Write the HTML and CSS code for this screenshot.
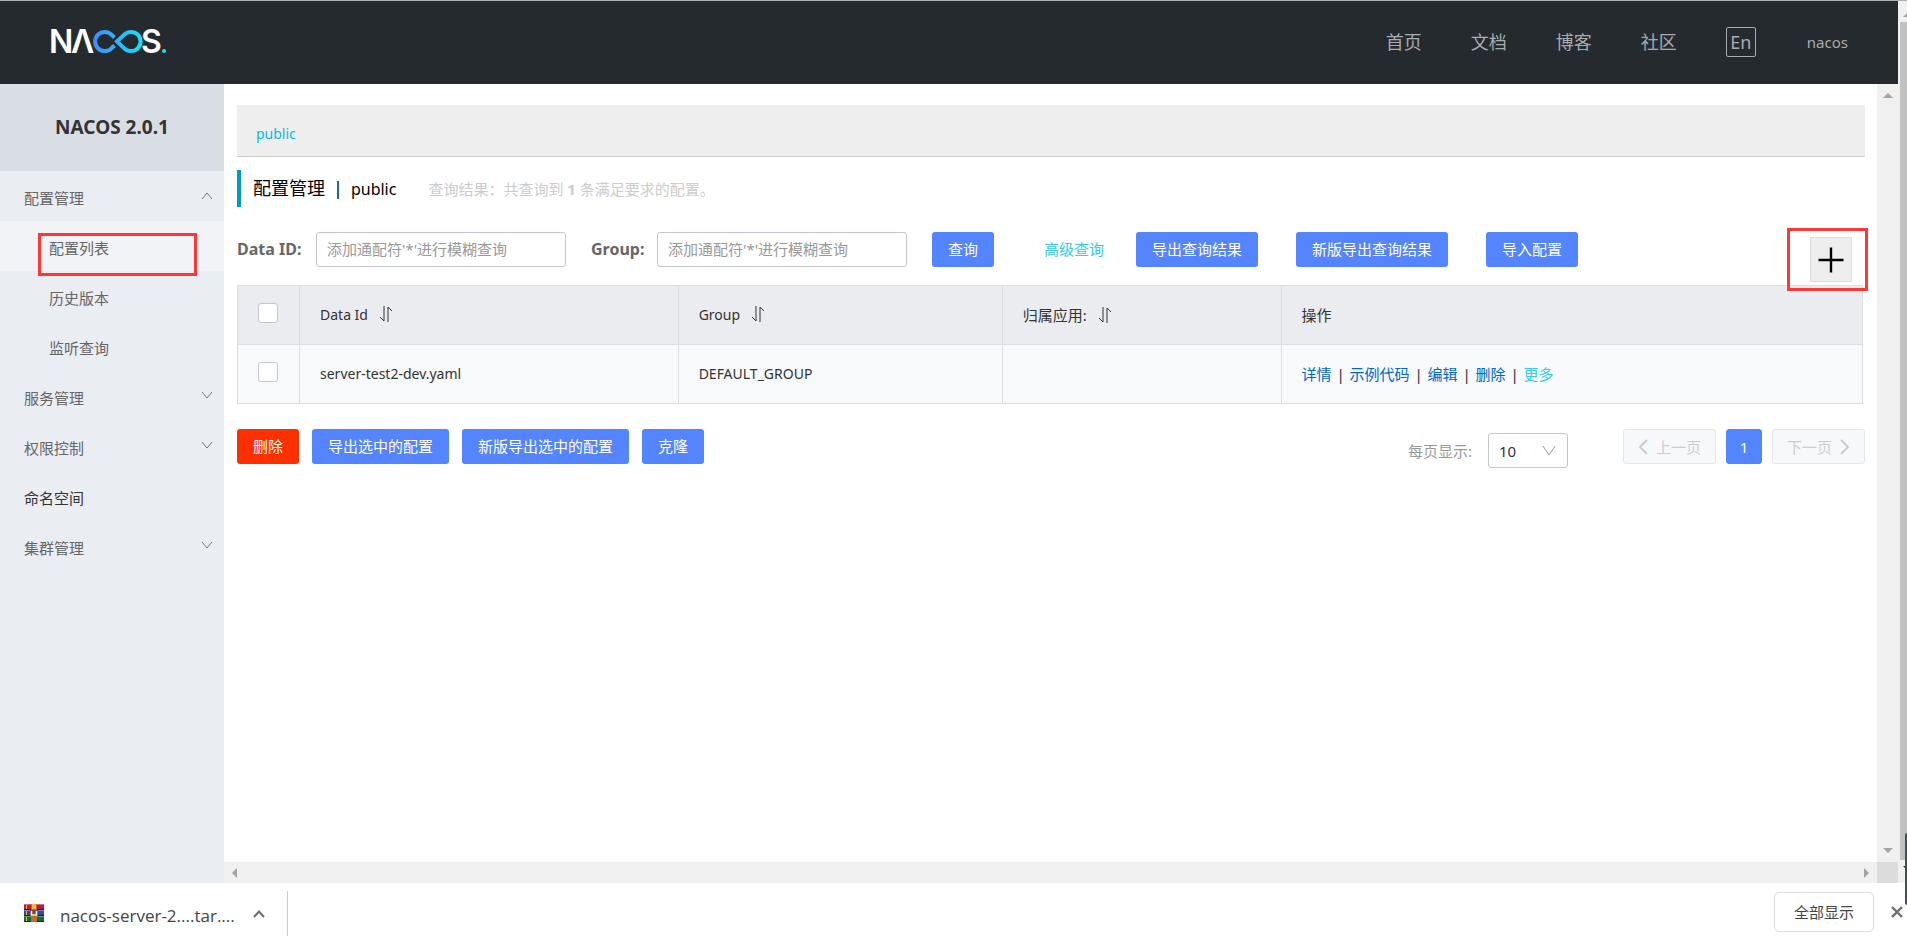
FILE: index.html
```html
<!DOCTYPE html>
<html lang="zh-CN">
<head>
<meta charset="utf-8">
<title>Nacos</title>
<link rel="stylesheet" href="styles.css">
</head>
<body>
<div class="window">
  <div class="viewport">
    <div class="app">
      <header class="topbar">
        <a class="logo" href="#" aria-label="Nacos">
          <svg width="118" height="26" viewBox="0 0 118 26">
            <defs>
              <linearGradient id="loop" gradientUnits="userSpaceOnUse" x1="43" y1="0" x2="92" y2="0">
                <stop offset="0" stop-color="#4089ff"/>
                <stop offset="1" stop-color="#16e2f5"/>
              </linearGradient>
            </defs>
            <g class="logo-text">
              <text x="-1" y="25">N</text>
              <text x="21" y="25">Λ</text>
              <text x="91" y="25">S</text>
            </g>
            <path d="M64.500 9.500 L61.500 6.700 A9.600 9.600 0 1 0 61.500 20.300 L64.500 17.500 M67 13.500 L74 6.900 A9.600 9.600 0 1 1 74 20.100 Z" fill="none" stroke="url(#loop)" stroke-width="4"/>
            <circle cx="114" cy="23" r="2" fill="#16e2f5"/>
          </svg>
        </a>
        <nav class="topnav">
          <a href="#">首页</a>
          <a href="#">文档</a>
          <a href="#">博客</a>
          <a href="#">社区</a>
          <button class="lang" type="button">En</button>
          <a class="user" href="#">nacos</a>
        </nav>
      </header>
      <div class="body">
        <aside class="sidebar">
          <h1 class="version">NACOS 2.0.1</h1>
          <nav class="menu">
            <button class="item" type="button">配置管理<svg class="chev" viewBox="0 0 12 12"><path d="M1 9l5-6 5 6"/></svg></button>
            <a class="item sub current" href="#">配置列表<span class="mark mark-menu"></span></a>
            <a class="item sub" href="#">历史版本</a>
            <a class="item sub" href="#">监听查询</a>
            <button class="item" type="button">服务管理<svg class="chev" viewBox="0 0 12 12"><path d="M1 2l5 6 5-6"/></svg></button>
            <button class="item" type="button">权限控制<svg class="chev" viewBox="0 0 12 12"><path d="M1 2l5 6 5-6"/></svg></button>
            <a class="item dark" href="#">命名空间</a>
            <button class="item" type="button">集群管理<svg class="chev" viewBox="0 0 12 12"><path d="M1 2l5 6 5-6"/></svg></button>
          </nav>
        </aside>
        <main class="main">
          <div class="namespaces"><a href="#">public</a></div>
          <div class="heading">
            <h2>配置管理<span class="bar">|</span><span class="ns">public</span></h2>
            <p>查询结果：共查询到 <strong>1</strong> 条满足要求的配置。</p>
          </div>
          <form class="search">
            <label class="label-id" for="dataId">Data ID:</label>
            <input class="field" id="dataId" type="text" placeholder="添加通配符'*'进行模糊查询">
            <label class="label-group" for="group">Group:</label>
            <input class="field" id="group" type="text" placeholder="添加通配符'*'进行模糊查询">
            <button class="btn query" type="button">查询</button>
            <a class="advanced" href="#">高级查询</a>
            <button class="btn export" type="button">导出查询结果</button>
            <button class="btn export-new" type="button">新版导出查询结果</button>
            <button class="btn import" type="button">导入配置</button>
            <span class="add-wrap">
              <button class="add" type="button" aria-label="新建配置"><svg width="26" height="26" viewBox="0 0 26 26"><path d="M0.500 13h25M13 0.500v25" stroke="#000" stroke-width="2.400"/></svg></button>
              <span class="mark mark-add"></span>
            </span>
          </form>
          <div class="table-wrap">
            <table class="table">
              <colgroup><col class="c-check"><col class="c-id"><col class="c-group"><col class="c-app"><col></colgroup>
              <thead>
                <tr>
                  <th class="check"><input type="checkbox" aria-label="全选"></th>
                  <th>Data Id<svg class="sort" viewBox="0 0 14 16"><path d="M5 0v15L1 11M9 16V1l4 4"/></svg></th>
                  <th>Group<svg class="sort" viewBox="0 0 14 16"><path d="M5 0v15L1 11M9 16V1l4 4"/></svg></th>
                  <th>归属应用:<svg class="sort" viewBox="0 0 14 16"><path d="M5 0v15L1 11M9 16V1l4 4"/></svg></th>
                  <th>操作</th>
                </tr>
              </thead>
              <tbody>
                <tr>
                  <td class="check"><input type="checkbox" aria-label="选择 server-test2-dev.yaml"></td>
                  <td>server-test2-dev.yaml</td>
                  <td>DEFAULT_GROUP</td>
                  <td></td>
                  <td><div class="actions"><a href="#">详情</a><i>|</i><a href="#">示例代码</a><i>|</i><a href="#">编辑</a><i>|</i><a href="#">删除</a><i>|</i><a class="more" href="#">更多</a></div></td>
                </tr>
              </tbody>
            </table>
          </div>
          <div class="footer">
            <div class="batch">
              <button class="btn danger" type="button">删除</button>
              <button class="btn" type="button">导出选中的配置</button>
              <button class="btn" type="button">新版导出选中的配置</button>
              <button class="btn" type="button">克隆</button>
            </div>
            <div class="pager">
              <div class="size">
                <label for="size">每页显示:</label>
                <span class="select"><select id="size"><option>10</option></select><svg viewBox="0 0 14 12"><path d="M1 1l6 9 6-9"/></svg></span>
              </div>
              <div class="pages">
                <button class="page" type="button" disabled><svg viewBox="0 0 10 16"><path d="M9 1L2 8l7 7"/></svg>上一页</button>
                <button class="page on" type="button">1</button>
                <button class="page" type="button" disabled>下一页<svg viewBox="0 0 10 16"><path d="M1 1l7 7-7 7"/></svg></button>
              </div>
            </div>
          </div>
        </main>
        <div class="vscroll">
          <svg width="10" height="5" viewBox="0 0 10 5"><path d="M0 5l5-5 5 5z"/></svg>
          <svg width="10" height="5" viewBox="0 0 10 5"><path d="M0 0l5 5 5-5z"/></svg>
        </div>
        <div class="hscroll">
          <svg width="5" height="10" viewBox="0 0 5 10"><path d="M5 0L0 5l5 5z"/></svg>
          <svg width="5" height="10" viewBox="0 0 5 10"><path d="M0 0l5 5-5 5z"/></svg>
        </div>
        <div class="corner"></div>
      </div>
    </div>
    <div class="outer-scroll">
      <svg width="10" height="5" viewBox="0 0 10 5"><path d="M0 5l5-5 5 5z"/></svg>
      <span class="thumb"></span>
      <svg class="down" width="10" height="5" viewBox="0 0 10 5"><path d="M0 0l5 5 5-5z"/></svg>
    </div>
  </div>
  <footer class="downloads">
    <div class="file">
      <svg class="rar" width="20" height="18" viewBox="0 0 20 18">
        <rect width="20" height="6" fill="#b01c48"/><rect width="20" height="1" fill="#e0668a"/>
        <rect y="6" width="20" height="6" fill="#3943a5"/><rect y="6" width="20" height="1" fill="#7a82d0"/>
        <rect y="12" width="20" height="6" fill="#17693c"/><rect y="12" width="20" height="1" fill="#4aa56e"/>
        <path d="M0 5.500h20M0 11.500h20M0 17.500h20" stroke="#251a28"/>
        <path d="M2.500 1v4M2.500 7v4M2.500 13v4" stroke="#f3b72c"/>
        <rect x="7" width="6" height="18" fill="#c56a20"/><rect x="8" width="4" height="5" fill="#f4b54a"/>
        <rect x="6" y="6" width="8" height="6" fill="#7b4a3a"/><path d="M7.500 7v4h5V7" fill="none" stroke="#f1eee6" stroke-width="1.500"/>
      </svg>
      <span>nacos-server-2....tar....</span>
      <button class="plain" type="button" aria-label="更多操作"><svg width="12" height="8" viewBox="0 0 12 8"><path d="M1 7l5-5.500L11 7" fill="none" stroke="#6a6d71" stroke-width="2"/></svg></button>
    </div>
    <button class="show-all" type="button">全部显示</button>
    <button class="plain close" type="button" aria-label="关闭"><svg width="12" height="12" viewBox="0 0 12 12"><path d="M1 1l10 10M11 1L1 11" stroke="#6a6d71" stroke-width="2.400"/></svg></button>
  </footer>
  <span class="edge"></span>
</div>
</body>
</html>
```
FILE: styles.css
```css
* { box-sizing: border-box; }

body {
  margin: 0;
  font-family: "Noto Sans", "Noto Sans CJK SC", sans-serif;
  font-size: 15px;
  line-height: 20px;
  color: #333;
  background: #fff;
}

button, input, select { font: inherit; color: inherit; margin: 0; }
button { padding: 0; border: 0; background: none; cursor: pointer; }
a { color: inherit; text-decoration: none; }
h1, h2, p { margin: 0; }

.window {
  position: relative;
  display: flex;
  flex-direction: column;
  min-height: 100vh;
  overflow: hidden;
}

.viewport { display: flex; flex: 1; border-top: 1px solid #aeaeae; }
.app { display: flex; flex-direction: column; flex: 1; min-width: 0; }

/* top bar */
.topbar {
  display: flex;
  justify-content: space-between;
  align-items: center;
  height: 83px;
  padding: 0 50px;
  background: #252a2f;
}
.logo { display: block; height: 26px; margin-bottom: 4px; }
.logo svg { display: block; overflow: visible; }
.logo-text { font-family: Inter, sans-serif; font-size: 32px; font-weight: 600; fill: #fff; }

.topnav { display: flex; align-items: center; gap: 49px; padding-bottom: 2px; font-size: 18px; color: #a9acae; }
.lang {
  width: 30px;
  height: 30px;
  border: 1px solid #a9acae;
  border-radius: 2px;
  line-height: 26px;
}
.user { margin-left: 2px; font-size: 15px; }

/* body grid */
.body {
  display: grid;
  flex: 1;
  grid-template-columns: 224px minmax(0, 1fr) 21px;
  grid-template-rows: 1fr 21px;
}
.sidebar { grid-row: 1 / 3; background: #eaedf2; }
.version {
  padding: 32px 0 33px;
  font-size: 19px;
  line-height: 22px;
  text-align: center;
  background: #d9dde4;
}
.menu { display: flex; flex-direction: column; color: #666; }
.item {
  position: relative;
  display: flex;
  justify-content: space-between;
  align-items: center;
  height: 50px;
  padding: 4px 11px 0 24px;
  text-align: left;
}
.sub { padding-left: 49px; }
.current { background: #f1f3f7; }
.dark { color: #333; }
.chev { width: 12px; height: 12px; margin-bottom: 4px; fill: none; stroke: #777; }

.mark { position: absolute; border: 3px solid #ff3737; pointer-events: none; }
.mark-menu { left: 38px; top: 12px; width: 159px; height: 43px; z-index: 1; }
.mark-add { left: -23px; top: -9px; width: 81px; height: 63px; }

/* main */
.main { padding: 21px 12px 21px 13px; }
.namespaces {
  padding: 19px 19px 12px;
  background: #eee;
  border-bottom: 1px solid #ccc;
  color: #00c1de;
}
.namespaces a { display: block; font-size: 14px; }
.heading {
  display: flex;
  align-items: center;
  gap: 32px;
  height: 37px;
  margin: 13px 0 25px;
  padding-left: 12px;
  border-left: 4px solid #09c;
}
.heading h2 { font-size: 18px; font-weight: 400; color: #000; }
.heading .bar { margin: 0 8px; }
.heading .ns { font-size: 16px; }
.heading p { color: #ccc; }

.search { display: flex; align-items: flex-start; min-height: 53px; line-height: 35px; }
.search label { font-size: 16px; font-weight: 700; color: #666; }
.label-id { width: 79px; }
.label-group { width: 66px; margin-left: 25px; }
.field {
  width: 250px;
  height: 35px;
  padding: 0 10px;
  border: 1px solid #c4c6cf;
  border-radius: 3px;
  background: #fff;
}
.field::placeholder { color: #999; opacity: 1; }
.btn {
  height: 35px;
  padding: 0 16px;
  border-radius: 3px;
  background: #5584ff;
  color: #fff;
  line-height: 35px;
  white-space: nowrap;
}
.danger { background: #ff3000; }
.query { margin: 0 50px 0 25px; }
.advanced { margin-right: 32px; color: #33cde5; white-space: nowrap; }
.export, .export-new { margin-right: 38px; }
.add-wrap { position: relative; margin: 5px 13px 0 auto; }
.add {
  display: grid;
  place-items: center;
  width: 42px;
  height: 45px;
  border: 1px solid #ddd;
  background: #eee;
}

.table-wrap { padding-right: 2px; }
.table { width: 100%; table-layout: fixed; border-collapse: collapse; }
.c-check { width: 62px; }
.c-id { width: 23.300%; }
.c-group { width: 19.950%; }
.c-app { width: 17.150%; }
.table th, .table td {
  height: 59px;
  padding: 0 20px;
  border: 1px solid #dcdee3;
  font-size: 15px;
  font-weight: 400;
  text-align: left;
}
.table th { background: #ebecf0; }
.table td { background: #f7f9fa; }
.table td:nth-child(2), .table td:nth-child(3), .table th:nth-child(2), .table th:nth-child(3) { font-size: 14px; }
.table input {
  appearance: none;
  display: block;
  width: 20px;
  height: 20px;
  margin-bottom: 4px;
  border: 1px solid #c4c6cf;
  border-radius: 3px;
  background: #fff;
}
.sort { width: 14px; height: 16px; margin-left: 11px; vertical-align: -2px; fill: none; stroke: #333; }
.actions { display: flex; color: #06c; }
.actions i { width: 18px; text-align: center; font-style: normal; color: #333; }
.actions .more { color: #33cde5; }

.footer { display: flex; justify-content: space-between; margin-top: 25px; }
.batch { display: flex; gap: 13px; }
.pager { display: flex; gap: 55px; }
.size { display: flex; align-items: center; gap: 16px; height: 35px; margin-top: 4px; color: #999; }
.select { position: relative; width: 80px; height: 35px; }
.select select {
  appearance: none;
  width: 100%;
  height: 100%;
  padding: 0 10px;
  border: 1px solid #c4c6cf;
  border-radius: 3px;
  background: #fff;
  color: #333;
}
.select svg { position: absolute; right: 12px; top: 12px; width: 14px; height: 12px; fill: none; stroke: #999; pointer-events: none; }
.pages { display: flex; gap: 10px; }
.page {
  display: flex;
  align-items: center;
  justify-content: center;
  gap: 8px;
  min-width: 36px;
  height: 35px;
  padding: 0 14px;
  border: 1px solid #e6e7eb;
  border-radius: 3px;
  background: #f7f8fa;
  color: #ccc;
}
.page svg { width: 10px; height: 16px; fill: none; stroke: #ccc; stroke-width: 2; }
.page.on { padding: 0; border-color: #5584ff; background: #5584ff; color: #fff; }

/* scroll bars */
.vscroll, .hscroll { display: flex; justify-content: space-between; align-items: center; background: #f0f0f0; fill: #a3a3a3; }
.vscroll { flex-direction: column; padding: 9px 0; }
.hscroll { grid-column: 2; padding: 0 8px; }
.corner { background: #dcdcdc; }
.outer-scroll { display: flex; flex-direction: column; width: 9px; padding: 11px 0 12px 2px; background: #f0f0f0; fill: #a3a3a3; overflow: hidden; }
.outer-scroll svg { flex: none; margin-left: 3px; }
.outer-scroll .thumb { flex: 1; width: 7px; margin: 5px 0 6px; background: #c1c1c1; }
.outer-scroll .down { fill: #333; }
.edge { position: absolute; right: 0; bottom: 31px; width: 2px; height: 72px; background: #4a4d55; border-radius: 2px 0 0 2px; }

/* downloads */
.downloads { display: flex; align-items: center; height: 53px; padding-right: 4px; background: #fff; color: #444; }
.file {
  display: flex;
  align-items: center;
  align-self: flex-end;
  height: 45px;
  margin-right: auto;
  padding: 0 22px 0 24px;
  border-right: 1px solid #ccc;
  font-family: "Open Sans", sans-serif;
  font-size: 17px;
}
.file .rar { margin-bottom: 2px; }
.file span { margin: 4px 18px 0 16px; }
.plain { display: block; line-height: 0; }
.close { margin-top: 5px; }
.show-all {
  width: 100px;
  height: 40px;
  margin: 5px 17px 0 0;
  border: 1px solid #dadce0;
  border-radius: 5px;
}
```
